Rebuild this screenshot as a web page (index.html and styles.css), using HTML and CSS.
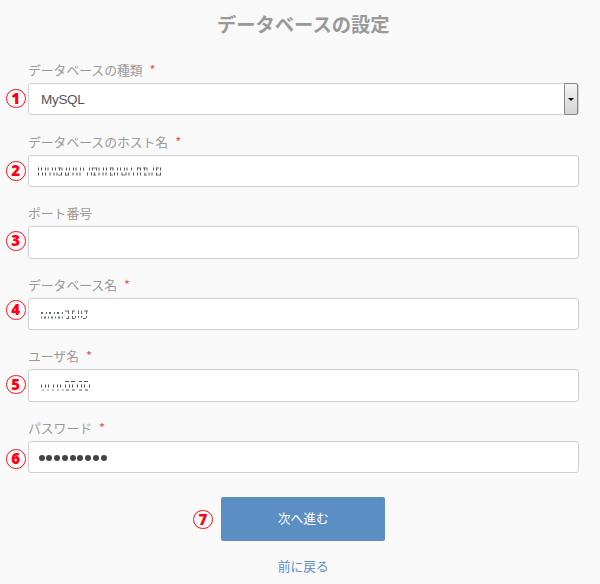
FILE: index.html
```html
<!DOCTYPE html>
<html lang="ja">
<head>
<meta charset="utf-8">
<title>データベースの設定</title>
<link rel="stylesheet" href="styles.css">
</head>
<body>
<main class="page">
  <h1 class="title">データベースの設定</h1>
  <form class="form">
    <div class="field">
      <label class="label">データベースの種類<span class="required">*</span></label>
      <div class="control select"><span class="select-value">MySQL</span><span class="select-button"></span></div>
      <span class="badge">1</span>
    </div>
    <div class="field">
      <label class="label">データベースのホスト名<span class="required">*</span></label>
      <div class="control">
        <svg class="masked" width="124" height="9" viewBox="0 0 124 9">
          <path d="M0 2H48M51 2H94M99 2H110M115 2H123" stroke="#555" stroke-width="3" stroke-dasharray="1 2 1 3 1 1.5 1 3.5"/>
          <path d="M0 7H46M49 7H123" stroke="#555" stroke-width="3" stroke-dasharray="1 3 1 2 1 3.5"/>
          <path d="M20 1h3M55 1h3M72 1h3M99 1h3M105 1h3M118 1h3M20 8h3M27 8h3M55 8h3M72 8h3M84 8h3M106 8h3M118 8h4" stroke="#777"/>
        </svg>
      </div>
      <span class="badge badge-2">2</span>
    </div>
    <div class="field">
      <label class="label">ポート番号</label>
      <div class="control"></div>
      <span class="badge badge-3">3</span>
    </div>
    <div class="field">
      <label class="label">データベース名<span class="required">*</span></label>
      <div class="control">
        <svg class="masked masked-name" width="52" height="9" viewBox="0 0 52 9">
          <path d="M1 3H24" stroke="#667" stroke-width="2" stroke-dasharray="2 3 1 2"/>
          <path d="M1 7.5H24" stroke="#577" stroke-width="2" stroke-dasharray="1 2 2 2"/>
          <path d="M25 1h4M32 1h3M38 1h1M41 1h1M44 1h4M28.5 1v3M32.5 1v3M38.5 1v3M41.5 1v3M46.5 1v3M28.5 6v2M32.5 6v2M35.5 6v2M38.5 6v2M41.5 6v2M46.5 6v2M26 8.5h3M32 8.5h3M43 8.5h3" stroke="#666"/>
        </svg>
      </div>
      <span class="badge badge-4">4</span>
    </div>
    <div class="field">
      <label class="label">ユーザ名<span class="required">*</span></label>
      <div class="control">
        <svg class="masked masked-user" width="52" height="10" viewBox="0 0 52 10">
          <path d="M25 .5h4M31 .5h4M39 .5h3M44 .5h4M26 9h3M32 9h3M39 9h3M45 9h3" stroke="#555"/>
          <path d="M1 5H50" stroke="#455" stroke-width="3" stroke-dasharray="1 3 1 2 1 4"/>
          <path d="M2 9H24" stroke="#888" stroke-dasharray="2 3"/>
        </svg>
      </div>
      <span class="badge badge-5">5</span>
    </div>
    <div class="field">
      <label class="label">パスワード<span class="required">*</span></label>
      <div class="control password"><i class="dot"></i><i class="dot"></i><i class="dot"></i><i class="dot"></i><i class="dot"></i><i class="dot"></i><i class="dot"></i><i class="dot"></i><i class="dot"></i></div>
      <span class="badge badge-6">6</span>
    </div>
    <div class="actions">
      <div class="submit">次へ進む<span class="badge badge-7">7</span></div>
      <a class="back">前に戻る</a>
    </div>
  </form>
</main>
</body>
</html>
```
FILE: styles.css
```css
* {
  box-sizing: border-box;
}

body {
  margin: 0;
  background: #f9f9f9;
  color: #999;
  font-family: "Noto Sans CJK JP", sans-serif;
  font-size: 12.8px;
}

.page {
  width: 600px;
  height: 584px;
  padding: 10px 21.5px 0 28px;
  overflow: hidden;
}

.title {
  margin: 0 0 18px;
  font-size: 19.3px;
  font-weight: 700;
  line-height: 28px;
  text-align: center;
}

.field {
  position: relative;
  height: 71.6px;
  padding-top: 4px;
}

.label {
  display: block;
  height: 23px;
  line-height: 20px;
  white-space: nowrap;
}

.required {
  margin-left: 7px;
  color: #d9534f;
}

.control {
  display: flex;
  align-items: center;
  height: 32.4px;
  padding-left: 9px;
  border: 1px solid #d0d0d0;
  border-radius: 3px;
  background: #fff;
}

.select {
  justify-content: space-between;
  padding-left: 12px;
  color: #555;
  font-family: "Liberation Sans", sans-serif;
  font-size: 13.5px;
  letter-spacing: -0.3px;
}

.select-button {
  display: flex;
  align-items: center;
  justify-content: center;
  align-self: stretch;
  width: 14px;
  margin: -1px 0;
  border: 1px solid #888;
  border-radius: 1px 2px 2px 1px;
  background: linear-gradient(#f4f4f4, #d4d4d4);
}

.select-button::before {
  content: "";
  border: 3px solid transparent;
  border-top-color: #111;
  border-bottom: 0;
}

.masked {
  margin-top: 1px;
}

.masked-name,
.masked-user {
  margin-left: 2px;
}

.password {
  gap: 1.8px;
  padding-left: 9.5px;
}

.dot {
  width: 6px;
  height: 6px;
  margin-top: 1px;
  border-radius: 50%;
  background: #444;
}

.badge {
  position: absolute;
  top: 32.5px;
  left: -22px;
  width: 19.5px;
  height: 19.5px;
  border: 1px solid #ff1020;
  border-radius: 50%;
  color: #ff0010;
  font: 800 15px/17px "Open Sans", sans-serif;
  text-align: center;
}

.badge-2 { top: 33.5px; }
.badge-3 { top: 32px; }
.badge-4 { top: 29.5px; }
.badge-5 { top: 32.5px; }
.badge-6 { top: 35.5px; }
.badge-7 { top: 13px; left: -28px; }

.actions {
  display: flex;
  flex-direction: column;
  align-items: center;
  padding-top: 11px;
}

.submit {
  position: relative;
  width: 164px;
  height: 44px;
  border-radius: 2px;
  background: #5b8fc3;
  color: #fff;
  line-height: 42px;
  text-align: center;
}

.back {
  margin-top: 15px;
  color: #5b8fc3;
  line-height: 20px;
}
```
